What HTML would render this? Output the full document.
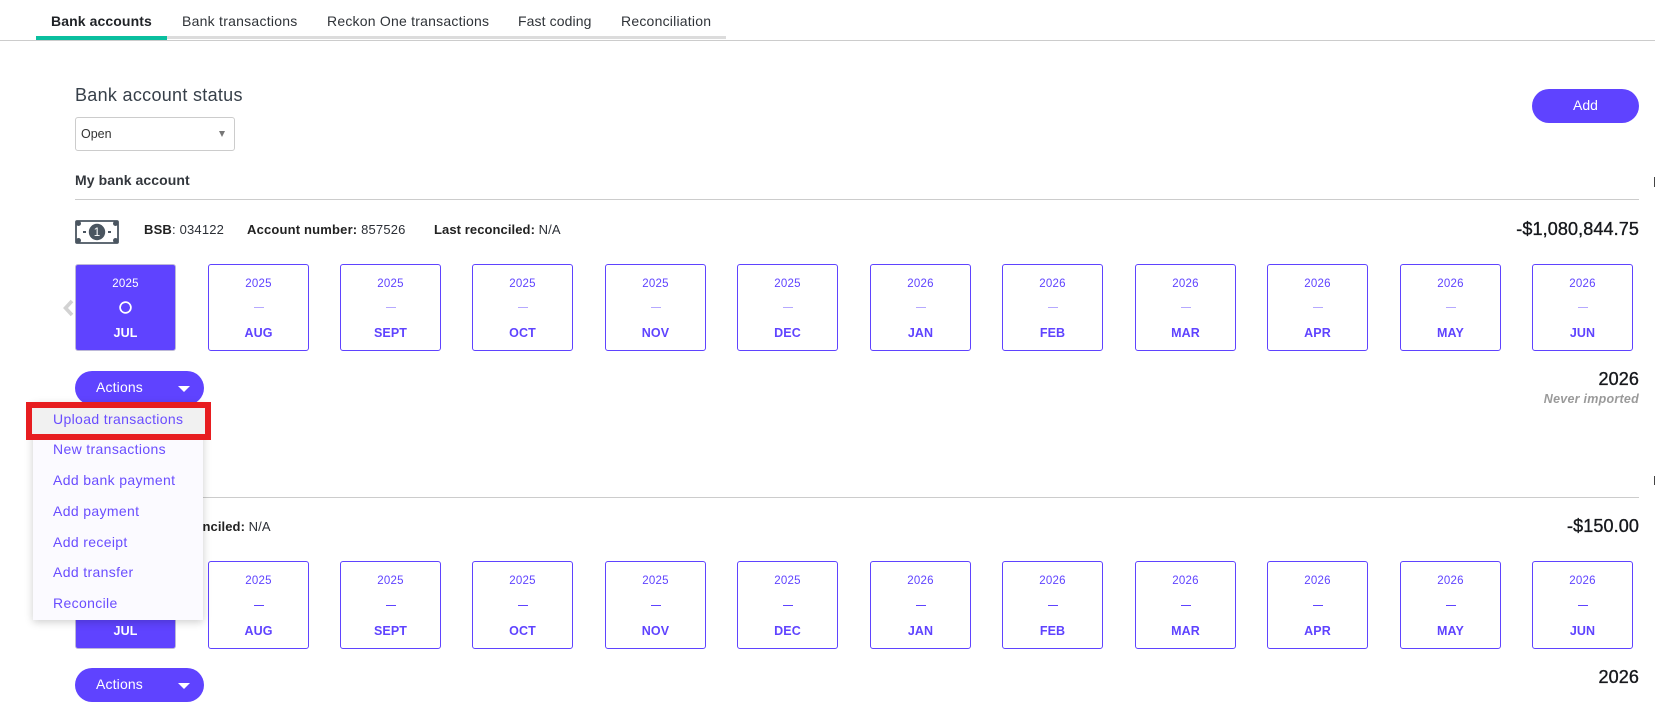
<!DOCTYPE html>
<html>
<head>
<meta charset="utf-8">
<style>
html,body{margin:0;padding:0;background:#fff;}
body{width:1655px;height:714px;overflow:hidden;position:relative;font-family:"Liberation Sans",Arial,sans-serif;color:#2b2f36;}
.t{position:absolute;white-space:nowrap;line-height:20px;height:20px;}
.r{text-align:right;right:16px;}
.tab{font-size:14px;top:11px;color:#2f3338;letter-spacing:.22px;}
.hr{position:absolute;height:1px;background:#ccc;}
.info{font-size:13px;color:#2b2f36;letter-spacing:.18px;}
.info b{color:#222;}
.amt{font-size:18px;color:#16181c;font-weight:400;letter-spacing:.12px;-webkit-text-stroke:.35px #16181c;}
.c{position:absolute;width:101px;box-sizing:border-box;border:1px solid #5f43ff;border-radius:3px;background:#fff;color:#5f43ff;text-align:center;}
.c.a{background:#5f43ff;color:#fff;border-color:#bdb8d8;}
.c .y{position:absolute;left:0;right:0;font-size:11.5px;line-height:14px;letter-spacing:.2px;}
.c .m{position:absolute;left:0;right:0;font-size:12.5px;line-height:16px;font-weight:700;letter-spacing:.1px;}
.c .d{position:absolute;left:45px;width:10px;height:1px;}
.r1{height:87px;top:264px;}
.r1 .y{top:12px;}.r1 .d{top:42px;background:#b5a8ff;}.r1 .m{top:60px;}
.r2{height:88px;top:561px;}
.r2 .y{top:12px;}.r2 .d{top:43px;background:#5f43ff;}.r2 .m{top:61px;}
.circ{position:absolute;left:43px;top:36px;width:13px;height:13px;display:block;}
.btn{position:absolute;background:#5f43ff;color:#fff;height:34px;line-height:33px;border-radius:17px;font-size:14px;}
.act{left:75px;width:129px;}
.act span{position:absolute;left:21px;letter-spacing:.15px;}
.act i{position:absolute;left:103px;top:15px;width:0;height:0;border-left:6px solid transparent;border-right:6px solid transparent;border-top:6px solid #fff;}
.menu{position:absolute;left:33px;top:403px;width:170px;height:217px;background:#fbfaff;box-shadow:0 2px 8px rgba(0,0,0,.2);}
.mi{position:absolute;left:53px;font-size:14px;color:#6a4dff;white-space:nowrap;line-height:20px;letter-spacing:.35px;}
.red{position:absolute;left:26px;top:402px;width:185px;height:38px;box-sizing:border-box;border:6px solid #e71d20;background:#f1f1f1;}
</style>
</head>
<body>
<div style="position:absolute;left:36px;top:36px;width:690px;height:3px;background:#dcdcdc"></div>
<div class="hr" style="left:0;top:40px;width:1655px;background:#ccc"></div>
<div style="position:absolute;left:36px;top:36px;width:131px;height:4px;background:#0abf9f"></div>
<div class="t tab" style="left:51px;font-weight:700;color:#1f2226;letter-spacing:.1px">Bank accounts</div>
<div class="t tab" style="left:182px;letter-spacing:.25px">Bank transactions</div>
<div class="t tab" style="left:327px">Reckon One transactions</div>
<div class="t tab" style="left:518px;letter-spacing:.1px">Fast coding</div>
<div class="t tab" style="left:621px">Reconciliation</div>

<div class="t" style="left:75px;top:85px;font-size:18px;line-height:20px;color:#37404a;letter-spacing:.3px">Bank account status</div>
<div style="position:absolute;left:75px;top:117px;width:160px;height:34px;box-sizing:border-box;border:1px solid #ccc;border-radius:3px;background:#fff"></div>
<div class="t" style="left:81px;top:124px;font-size:12.5px;color:#333">Open</div>
<div style="position:absolute;left:219px;top:131px;width:0;height:0;border-left:3px solid transparent;border-right:3px solid transparent;border-top:6px solid #777"></div>
<div class="btn" style="left:1532px;top:89px;width:107px;text-align:center">Add</div>

<div class="t" style="left:75px;top:170px;font-size:14px;font-weight:700;color:#33373d;letter-spacing:.08px">My bank account</div>
<div class="hr" style="left:75px;top:199px;width:1564px"></div>
<div style="position:absolute;left:1654px;top:177px;width:1px;height:10px;background:#444"></div>

<svg style="position:absolute;left:75px;top:220px" width="44" height="24" viewBox="0 0 44 24">
<rect x="1" y="1" width="42" height="22" fill="#fff" stroke="#4a5560" stroke-width="1.8" rx="1"/>
<circle cx="3.5" cy="3.5" r="2.5" fill="#4a5560"/><circle cx="40.5" cy="3.5" r="2.5" fill="#4a5560"/>
<circle cx="3.5" cy="20.5" r="2.5" fill="#4a5560"/><circle cx="40.5" cy="20.5" r="2.5" fill="#4a5560"/>
<circle cx="22" cy="12" r="8.2" fill="#4a5560"/>
<rect x="8" y="11" width="3" height="2" fill="#4a5560"/><rect x="33" y="11" width="3" height="2" fill="#4a5560"/>
<text x="22" y="16" font-size="11.5" text-anchor="middle" fill="#fff" font-family="Liberation Sans,sans-serif">1</text>
</svg>

<div class="t info" style="left:144px;top:220px"><b>BSB</b>: 034122</div>
<div class="t info" style="left:247px;top:220px"><b>Account number:</b> 857526</div>
<div class="t info" style="left:434px;top:220px;letter-spacing:.08px"><b>Last reconciled:</b> N/A</div>
<div class="t r amt" style="top:219px">-$1,080,844.75</div>

<svg style="position:absolute;left:62px;top:299px" width="12" height="18" viewBox="0 0 12 18"><path d="M10 2 L3.5 9 L10 16" fill="none" stroke="#d2d2d2" stroke-width="3.6"/></svg>

<div class="c a r1" style="left:75px"><div class="y">2025</div><svg class="circ" viewBox="0 0 13 13"><circle cx="6.5" cy="6.5" r="5.4" fill="none" stroke="#fff" stroke-width="1.7"/></svg><div class="m">JUL</div></div>
<div class="c r1" style="left:208px"><div class="y">2025</div><div class="d"></div><div class="m">AUG</div></div>
<div class="c r1" style="left:340px"><div class="y">2025</div><div class="d"></div><div class="m">SEPT</div></div>
<div class="c r1" style="left:472px"><div class="y">2025</div><div class="d"></div><div class="m">OCT</div></div>
<div class="c r1" style="left:605px"><div class="y">2025</div><div class="d"></div><div class="m">NOV</div></div>
<div class="c r1" style="left:737px"><div class="y">2025</div><div class="d"></div><div class="m">DEC</div></div>
<div class="c r1" style="left:870px"><div class="y">2026</div><div class="d"></div><div class="m">JAN</div></div>
<div class="c r1" style="left:1002px"><div class="y">2026</div><div class="d"></div><div class="m">FEB</div></div>
<div class="c r1" style="left:1135px"><div class="y">2026</div><div class="d"></div><div class="m">MAR</div></div>
<div class="c r1" style="left:1267px"><div class="y">2026</div><div class="d"></div><div class="m">APR</div></div>
<div class="c r1" style="left:1400px"><div class="y">2026</div><div class="d"></div><div class="m">MAY</div></div>
<div class="c r1" style="left:1532px"><div class="y">2026</div><div class="d"></div><div class="m">JUN</div></div>

<div class="btn act" style="top:371px"><span>Actions</span><i></i></div>
<div class="t r amt" style="top:369px">2026</div>
<div class="t r" style="top:389px;font-size:12.5px;font-weight:700;font-style:italic;color:#9a9a9a;letter-spacing:.25px">Never imported</div>

<div class="hr" style="left:75px;top:497px;width:1564px"></div>
<div style="position:absolute;left:1654px;top:476px;width:1px;height:9px;background:#444"></div>
<div class="t info" style="left:144px;top:517px;letter-spacing:.08px"><b>Last reconciled:</b> N/A</div>
<div class="t r amt" style="top:516px">-$150.00</div>

<div class="c a r2" style="left:75px"><div class="y">2025</div><div class="m">JUL</div></div>
<div class="c r2" style="left:208px"><div class="y">2025</div><div class="d"></div><div class="m">AUG</div></div>
<div class="c r2" style="left:340px"><div class="y">2025</div><div class="d"></div><div class="m">SEPT</div></div>
<div class="c r2" style="left:472px"><div class="y">2025</div><div class="d"></div><div class="m">OCT</div></div>
<div class="c r2" style="left:605px"><div class="y">2025</div><div class="d"></div><div class="m">NOV</div></div>
<div class="c r2" style="left:737px"><div class="y">2025</div><div class="d"></div><div class="m">DEC</div></div>
<div class="c r2" style="left:870px"><div class="y">2026</div><div class="d"></div><div class="m">JAN</div></div>
<div class="c r2" style="left:1002px"><div class="y">2026</div><div class="d"></div><div class="m">FEB</div></div>
<div class="c r2" style="left:1135px"><div class="y">2026</div><div class="d"></div><div class="m">MAR</div></div>
<div class="c r2" style="left:1267px"><div class="y">2026</div><div class="d"></div><div class="m">APR</div></div>
<div class="c r2" style="left:1400px"><div class="y">2026</div><div class="d"></div><div class="m">MAY</div></div>
<div class="c r2" style="left:1532px"><div class="y">2026</div><div class="d"></div><div class="m">JUN</div></div>

<div class="btn act" style="top:668px"><span>Actions</span><i></i></div>
<div class="t r amt" style="top:667px">2026</div>

<div class="menu"></div>
<div class="red"></div>
<div class="mi" style="top:409px">Upload transactions</div>
<div class="mi" style="top:439px">New transactions</div>
<div class="mi" style="top:470px">Add bank payment</div>
<div class="mi" style="top:501px">Add payment</div>
<div class="mi" style="top:532px">Add receipt</div>
<div class="mi" style="top:562px">Add transfer</div>
<div class="mi" style="top:593px">Reconcile</div>
</body>
</html>
